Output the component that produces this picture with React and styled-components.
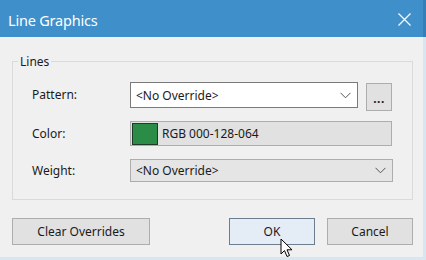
import React from "react";
import styled, { createGlobalStyle } from "styled-components";

const GlobalStyle = createGlobalStyle`
  html, body {
    margin: 0;
    padding: 0;
    background: #f0f0f0;
  }
  * {
    box-sizing: border-box;
  }
`;

const Window = styled.div`
  position: relative;
  width: 426px;
  height: 260px;
  display: flex;
  flex-direction: column;
  background: #f0f0f0;
  font-family: "Noto Sans", "Open Sans", sans-serif;
  font-size: 12px;
  color: #1a1a1a;
  overflow: hidden;
`;

const TitleBar = styled.div`
  height: 37px;
  flex-shrink: 0;
  background: #3e8fca;
  border-right: 3px solid #357fb6;
  display: flex;
  align-items: center;
  justify-content: space-between;
  padding: 2px 12px 0 8px;
`;

const Title = styled.span`
  color: #ffffff;
  font-size: 14.5px;
  letter-spacing: -0.2px;
`;

const Body = styled.div`
  flex: 1;
  padding: 16px 7px 0 12px;
  border-right: 3px solid #d6e6f3;
  border-bottom: 3px solid #d6e6f3;
`;

const Group = styled.fieldset`
  margin: 0;
  width: 401px;
  border: 1px solid #dadada;
  padding: 12px 0 17px 19px;
`;

const Legend = styled.legend`
  padding: 0 2px;
  margin-left: -14px;
  font-size: 12px;
`;

const Row = styled.div`
  display: flex;
  align-items: flex-start;
  height: ${(p) => p.h}px;
  margin-top: ${(p) => p.mt || 0}px;
`;

const Label = styled.div`
  width: 98px;
  line-height: ${(p) => p.h}px;
`;

const Combo = styled.div`
  display: flex;
  align-items: center;
  justify-content: space-between;
  width: ${(p) => p.w}px;
  height: ${(p) => p.h}px;
  padding: 0 6px 0 5px;
  background: ${(p) => (p.active ? "#ffffff" : "#e5e5e5")};
  border: 1px solid ${(p) => (p.active ? "#7a7a7a" : "#adadad")};
`;

const MoreButton = styled.div`
  width: 26px;
  height: 28px;
  margin: 1px 0 0 8px;
  background: #e1e1e1;
  border: 1px solid #adadad;
  display: flex;
  align-items: center;
  justify-content: center;
  padding-top: 2px;
  font-weight: bold;
  letter-spacing: 0.5px;
`;

const ColorBox = styled.div`
  display: flex;
  align-items: center;
  gap: 4px;
  width: 262px;
  height: 25px;
  padding: 0 1px;
  background: #e1e1e1;
  border: 1px solid #adadad;
`;

const Swatch = styled.div`
  width: 26px;
  height: 22px;
  background: ${(p) => p.color};
  border: 1px solid #1f3a27;
`;

const ButtonRow = styled.div`
  display: flex;
  align-items: center;
  margin-top: 18px;
`;

const Button = styled.div`
  width: ${(p) => p.w}px;
  height: 27px;
  margin-left: ${(p) => p.ml || 0}px;
  display: flex;
  align-items: center;
  justify-content: center;
  background: ${(p) => (p.primary ? "#e4edf6" : "#e1e1e1")};
  border: 1px solid ${(p) => (p.primary ? "#6c7d8f" : "#adadad")};
`;

const Cursor = styled.svg`
  position: absolute;
  left: 280px;
  top: 238px;
`;

const Chevron = () => (
  <svg width="11" height="7" viewBox="0 0 11 7">
    <path d="M0.5 0.8 L5.5 5.8 L10.5 0.8" fill="none" stroke="#555" strokeWidth="1" />
  </svg>
);

const CloseIcon = () => (
  <svg width="13" height="13" viewBox="0 0 13 13">
    <path d="M0.5 0.5 L12.5 12.5 M12.5 0.5 L0.5 12.5" stroke="#ffffff" strokeWidth="1.2" />
  </svg>
);

const App = () => {
  return (
    <>
      <GlobalStyle />
      <Window>
        <TitleBar>
          <Title>Line Graphics</Title>
          <CloseIcon />
        </TitleBar>
        <Body>
          <Group>
            <Legend>Lines</Legend>
            <Row h={29}>
              <Label h={26}>Pattern:</Label>
              <Combo active w={228} h={26}>
                <span>&lt;No Override&gt;</span>
                <Chevron />
              </Combo>
              <MoreButton>...</MoreButton>
            </Row>
            <Row h={25} mt={10}>
              <Label h={25}>Color:</Label>
              <ColorBox>
                <Swatch color="#2a8c46" />
                <span>RGB 000-128-064</span>
              </ColorBox>
            </Row>
            <Row h={23} mt={13}>
              <Label h={23}>Weight:</Label>
              <Combo w={263} h={23}>
                <span>&lt;No Override&gt;</span>
                <Chevron />
              </Combo>
            </Row>
          </Group>
          <ButtonRow>
            <Button w={138}>Clear Overrides</Button>
            <Button primary w={86} ml={79}>OK</Button>
            <Button w={86} ml={12}>Cancel</Button>
          </ButtonRow>
        </Body>
        <Cursor width="14" height="21" viewBox="0 0 14 21">
          <path
            d="M1 1 L1 16 L4.5 12.5 L7 18.5 L9.5 17.5 L7 11.8 L12 11.8 Z"
            fill="#ffffff"
            stroke="#000000"
            strokeWidth="1"
            strokeLinejoin="round"
          />
        </Cursor>
      </Window>
    </>
  );
};

export default App;
